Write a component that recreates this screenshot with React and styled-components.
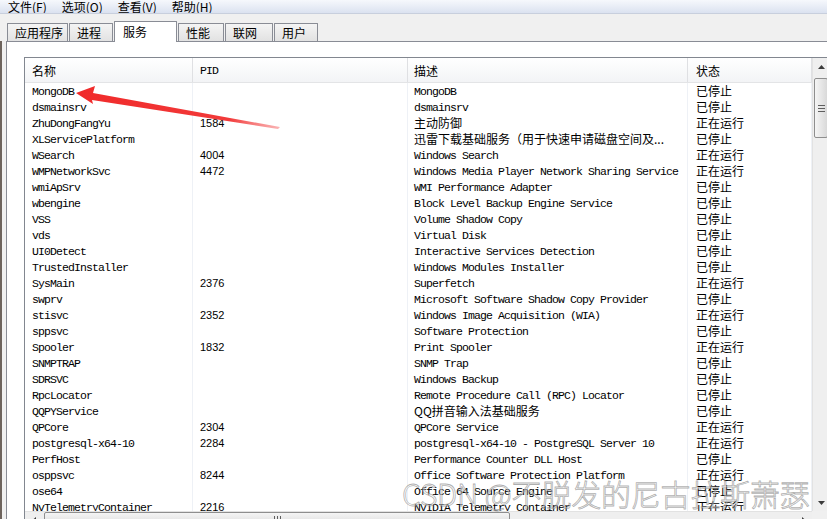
import React from 'react';
import styled, { createGlobalStyle } from 'styled-components';

const GlobalStyle = createGlobalStyle`
  html, body { margin: 0; padding: 0; background: #f0f0f0; overflow: hidden; }
  * { box-sizing: border-box; }
`;

const Window = styled.div`
  position: relative;
  width: 827px;
  height: 519px;
  overflow: hidden;
  background: #f0f0f0;
  display: flex;
  flex-direction: column;
  font-family: "Noto Sans CJK SC", "Noto Sans", sans-serif;
  color: #000;
`;

const MenuBar = styled.div`
  height: 14px;
  flex: none;
  display: flex;
  align-items: center;
  gap: 15px;
  padding-left: 8px;
  background: linear-gradient(#f6f8fc, #dbe2f0);
  border-bottom: 1px solid #c8cfdd;
  font-size: 12px;
  line-height: 13px;
  overflow: hidden;
`;

const MenuItem = styled.span`
  white-space: nowrap;
`;

const TabStrip = styled.div`
  height: 27px;
  flex: none;
  display: flex;
  align-items: flex-end;
  gap: 1px;
  padding-left: 7px;
  position: relative;
  z-index: 2;
`;

const Tab = styled.div`
  position: relative;
  width: ${p => p.$w}px;
  height: ${p => (p.$active ? 21 : 18)}px;
  margin-bottom: ${p => (p.$active ? -1 : 0)}px;
  padding-left: ${p => (p.$active ? 8 : 7)}px;
  padding-top: 1px;
  border: 1px solid #898c95;
  border-bottom: none;
  border-radius: 1px 1px 0 0;
  background: ${p => (p.$active ? '#ffffff' : 'linear-gradient(#f4f4f4, #e2e2e2)')};
  font-size: 12px;
  line-height: ${p => (p.$active ? 17 : 16)}px;
  white-space: nowrap;
`;

const PanelRow = styled.div`
  flex: 1;
  display: flex;
  border-left: 2px solid #6d635c;
  padding-left: 4px;
  min-height: 0;
`;

const Panel = styled.div`
  flex: 1;
  background: #ffffff;
  border: 1px solid #898c95;
  border-right: none;
  border-bottom: none;
  padding: 15px 0 0 17px;
  min-width: 0;
  overflow: hidden;
`;

const ListView = styled.div`
  flex: none;
  width: 806px;
  height: 472px;
  border: 1px solid #828790;
  display: grid;
  grid-template-columns: 787px 17px;
  grid-template-rows: 453px 17px;
  background: #ffffff;
`;

const Main = styled.div`
  overflow: hidden;
  min-height: 0;
  display: flex;
  flex-direction: column;
`;

const COLS = '168px 215px 280px 124px';

const HeaderRow = styled.div`
  flex: none;
  height: 25px;
  display: grid;
  grid-template-columns: ${COLS};
  background: linear-gradient(#ffffff, #f3f4f6);
  border-bottom: 1px solid #e3e4e6;
`;

const HeaderCell = styled.div`
  padding-left: ${p => p.$pad}px;
  padding-top: 2px;
  border-right: 1px solid #dfe0e3;
  font-family: ${p => (p.$mono ? '"Liberation Mono", monospace' : '"Noto Sans CJK SC", sans-serif')};
  font-size: ${p => (p.$mono ? 11.5 : 12)}px;
  letter-spacing: ${p => (p.$mono ? '-0.9px' : '0')};
  line-height: 22px;
  white-space: nowrap;
`;

const Row = styled.div`
  flex: none;
  height: 16px;
  display: grid;
  grid-template-columns: ${COLS};
`;

const Cell = styled.div`
  padding-left: ${p => p.$pad}px;
  padding-top: ${p => (p.$cjk ? 0 : 1)}px;
  border-right: 1px solid #eef1f6;
  font-family: ${p =>
    p.$cjk ? '"Noto Sans CJK SC", sans-serif' : p.$num ? '"Liberation Sans", sans-serif' : '"Liberation Mono", "Noto Sans CJK SC", monospace'};
  font-size: ${p => (p.$cjk ? 12 : p.$num ? 11 : 11.5)}px;
  letter-spacing: ${p => (p.$cjk || p.$num ? '0' : '-0.9px')};
  line-height: 15px;
  white-space: nowrap;
  overflow: hidden;
`;

const VScroll = styled.div`
  min-height: 0;
  background: #efefef;
  border-left: 1px solid #e2e2e2;
  display: flex;
  flex-direction: column;
  justify-content: space-between;
`;

const HScroll = styled.div`
  min-width: 0;
  background: #efefef;
  border-top: 1px solid #e2e2e2;
  display: flex;
  align-items: stretch;
`;

const Corner = styled.div`
  background: #f0f0f0;
`;

const ArrowBtn = styled.div`
  flex: none;
  width: ${p => (p.$h ? 17 : 16)}px;
  height: ${p => (p.$h ? 16 : 17)}px;
  display: flex;
  align-items: center;
  justify-content: center;
`;

const Track = styled.div`
  flex: 1;
  display: flex;
  flex-direction: ${p => (p.$h ? 'row' : 'column')};
  padding: ${p => (p.$h ? '0 0 0 2px' : '3px 1px 0 1px')};
`;

const Thumb = styled.div`
  flex: none;
  ${p => (p.$h ? 'width: 466px; height: 15px;' : 'height: 60px; width: 14px;')}
  border: 1px solid #8e8e8e;
  border-radius: 2px;
  background: ${p =>
    p.$h ? 'linear-gradient(#f5f5f5, #d9d9d9)' : 'linear-gradient(to right, #f5f5f5, #d9d9d9)'};
  display: flex;
  align-items: center;
  justify-content: center;
`;

const Watermark = styled.div`
  position: absolute;
  left: 402px;
  top: 477px;
  font-family: "Noto Sans CJK SC", sans-serif;
  font-weight: 300;
  font-size: 30px;
  line-height: 32px;
  letter-spacing: -0.2px;
  white-space: nowrap;
  color: rgba(255, 255, 255, 0.45);
  -webkit-text-stroke: 0.8px rgba(120, 120, 120, 0.6);
  pointer-events: none;
`;

const Overlay = styled.svg`
  position: absolute;
  left: 0;
  top: 0;
  pointer-events: none;
`;

const tabs = [
  { t: '应用程序', w: 61 },
  { t: '进程', w: 44 },
  { t: '服务', w: 63, active: true },
  { t: '性能', w: 46 },
  { t: '联网', w: 48 },
  { t: '用户', w: 44 },
];

const S = '已停止';
const R = '正在运行';

const rows = [
  ['MongoDB', '', 'MongoDB', S],
  ['dsmainsrv', '', 'dsmainsrv', S],
  ['ZhuDongFangYu', '1584', '主动防御', R, true],
  ['XLServicePlatform', '', '迅雷下载基础服务（用于快速申请磁盘空间及...', S, true],
  ['WSearch', '4004', 'Windows Search', R],
  ['WMPNetworkSvc', '4472', 'Windows Media Player Network Sharing Service', R],
  ['wmiApSrv', '', 'WMI Performance Adapter', S],
  ['wbengine', '', 'Block Level Backup Engine Service', S],
  ['VSS', '', 'Volume Shadow Copy', S],
  ['vds', '', 'Virtual Disk', S],
  ['UI0Detect', '', 'Interactive Services Detection', S],
  ['TrustedInstaller', '', 'Windows Modules Installer', S],
  ['SysMain', '2376', 'Superfetch', R],
  ['swprv', '', 'Microsoft Software Shadow Copy Provider', S],
  ['stisvc', '2352', 'Windows Image Acquisition (WIA)', R],
  ['sppsvc', '', 'Software Protection', S],
  ['Spooler', '1832', 'Print Spooler', R],
  ['SNMPTRAP', '', 'SNMP Trap', S],
  ['SDRSVC', '', 'Windows Backup', S],
  ['RpcLocator', '', 'Remote Procedure Call (RPC) Locator', S],
  ['QQPYService', '', 'QQ拼音输入法基础服务', S, true],
  ['QPCore', '2304', 'QPCore Service', R],
  ['postgresql-x64-10', '2284', 'postgresql-x64-10 - PostgreSQL Server 10', R],
  ['PerfHost', '', 'Performance Counter DLL Host', S],
  ['osppsvc', '8244', 'Office Software Protection Platform', R],
  ['ose64', '', 'Office 64 Source Engine', S],
  ['NvTelemetryContainer', '2216', 'NVIDIA Telemetry Container', R],
];

const Tri = ({ dir }) => {
  const pts = {
    up: '0,4 3.5,0 7,4',
    down: '0,0 7,0 3.5,4',
    left: '4,0 4,7 0,3.5',
    right: '0,0 0,7 4,3.5',
  }[dir];
  const horiz = dir === 'left' || dir === 'right';
  return (
    <svg width={horiz ? 4 : 7} height={horiz ? 7 : 4} viewBox={horiz ? '0 0 4 7' : '0 0 7 4'}>
      <polygon points={pts} fill="#3c3c3c" />
    </svg>
  );
};

const Grip = ({ h }) =>
  h ? (
    <svg width="7" height="7" viewBox="0 0 7 7">
      <path d="M0.5 0v7M3.5 0v7M6.5 0v7" stroke="#5e5e5e" strokeWidth="1" />
    </svg>
  ) : (
    <svg width="7" height="7" viewBox="0 0 7 7">
      <path d="M0 0.5h7M0 3.5h7M0 6.5h7" stroke="#5e5e5e" strokeWidth="1" />
    </svg>
  );

export default function App() {
  return (
    <>
      <GlobalStyle />
      <Window>
        <MenuBar>
          <MenuItem>文件(F)</MenuItem>
          <MenuItem>选项(O)</MenuItem>
          <MenuItem>查看(V)</MenuItem>
          <MenuItem>帮助(H)</MenuItem>
        </MenuBar>
        <TabStrip>
          {tabs.map(t => (
            <Tab key={t.t} $w={t.w} $active={t.active}>
              {t.t}
            </Tab>
          ))}
        </TabStrip>
        <PanelRow>
          <Panel>
            <ListView>
              <Main>
                <HeaderRow>
                  <HeaderCell $pad={7}>名称</HeaderCell>
                  <HeaderCell $pad={7} $mono>PID</HeaderCell>
                  <HeaderCell $pad={6}>描述</HeaderCell>
                  <HeaderCell $pad={8}>状态</HeaderCell>
                </HeaderRow>
                {rows.map((r, i) => (
                  <Row key={i}>
                    <Cell $pad={7}>{r[0]}</Cell>
                    <Cell $pad={7} $num>{r[1]}</Cell>
                    <Cell $pad={6} $cjk={r[4]}>{r[2]}</Cell>
                    <Cell $pad={8} $cjk>{r[3]}</Cell>
                  </Row>
                ))}
              </Main>
              <VScroll>
                <ArrowBtn><Tri dir="up" /></ArrowBtn>
                <Track>
                  <Thumb><Grip /></Thumb>
                </Track>
                <ArrowBtn><Tri dir="down" /></ArrowBtn>
              </VScroll>
              <HScroll>
                <ArrowBtn $h><Tri dir="left" /></ArrowBtn>
                <Track $h>
                  <Thumb $h><Grip h /></Thumb>
                </Track>
                <ArrowBtn $h><Tri dir="right" /></ArrowBtn>
              </HScroll>
              <Corner />
            </ListView>
          </Panel>
        </PanelRow>
        <Watermark>CSDN @不脱发的尼古拉斯萧瑟</Watermark>
        <Overlay width="827" height="519" viewBox="0 0 827 519">
          <defs>
            <linearGradient id="arrowFade" x1="76" y1="94" x2="280" y2="128" gradientUnits="userSpaceOnUse">
              <stop offset="0" stopColor="#f02a2a" />
              <stop offset="0.75" stopColor="#f23a3a" />
              <stop offset="1" stopColor="#f56a6a" stopOpacity="0.5" />
            </linearGradient>
          </defs>
          <polygon
            points="76,93 95,86 93,93 280,127 278,129 92,100 93,104"
            fill="url(#arrowFade)"
          />
        </Overlay>
      </Window>
    </>
  );
}
